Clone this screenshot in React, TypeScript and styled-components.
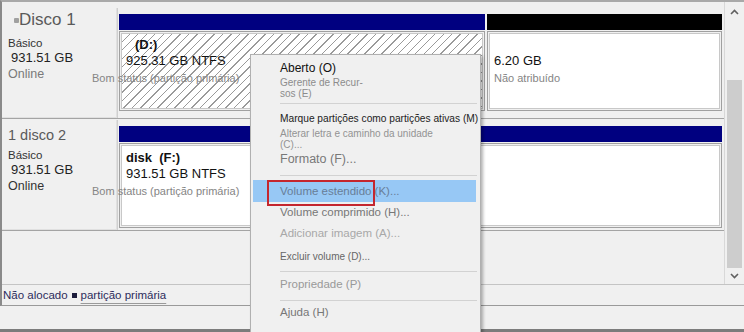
import styled, { createGlobalStyle } from "styled-components";

const GlobalStyle = createGlobalStyle`
  html, body { margin: 0; padding: 0; }
  body {
    font-family: "Liberation Sans", Arial, sans-serif;
    background: #f0f0f0;
  }
`;

const Window = styled.div`
  position: relative;
  width: 744px;
  height: 332px;
  overflow: hidden;
  background: #f0f0f0;
  display: flex;
  flex-direction: column;
`;

const Frame = styled.div`
  height: 306px;
  box-sizing: border-box;
  border-top: 2px solid #a9a9a9;
  border-left: 2px solid #8a8a8a;
  border-bottom: 1px solid #9a9a9a;
  display: flex;
  flex-direction: column;
`;

const Main = styled.div`
  flex: 1;
  display: flex;
  min-height: 0;
`;

const Content = styled.div`
  width: 722px;
  display: flex;
  flex-direction: column;
  padding-top: 6px;
  box-sizing: border-box;
`;

const DiskRow = styled.div`
  display: grid;
  grid-template-columns: 116px 1fr;
  height: 110px;
  border-bottom: 1px solid #a4a4a4;
  margin-bottom: 1px;
`;

const Label = styled.div<{ $top: number }>`
  background: #f0f0f0;
  border-right: 1px solid #cfcfcf;
  box-shadow: inset -1px -1px 0 #e0e0e0;
  padding: ${(p) => p.$top}px 0 0 6px;
  display: flex;
  flex-direction: column;
`;

const Title = styled.div<{ $gap: number; $size: number }>`
  display: flex;
  align-items: center;
  font-size: ${(p) => p.$size}px;
  line-height: 24px;
  color: #5a5a5a;
  margin-bottom: ${(p) => p.$gap}px;
`;

const DiskIcon = styled.span`
  width: 5px;
  height: 5px;
  margin: 0 0 0 6px;
  background: #a0a0a0;
  border-radius: 1px;
`;

const Kind = styled.div`
  font-size: 11.5px;
  line-height: 14px;
  color: #333;
`;

const Size = styled.div`
  font-size: 13px;
  line-height: 16px;
  color: #222;
  padding-left: 3px;
`;

const State = styled.div<{ $dark?: boolean }>`
  font-size: 12.5px;
  line-height: 16px;
  color: ${(p) => (p.$dark ? "#333" : "#7a7a7a")};
`;

const Partitions = styled.div`
  display: flex;
  gap: 2px;
  padding: 6px 2px 0 1px;
`;

const Cell = styled.div<{ $w?: number; $bottom: number }>`
  ${(p) => (p.$w ? `width: ${p.$w}px;` : "flex: 1;")}
  display: flex;
  flex-direction: column;
  padding-bottom: ${(p) => p.$bottom}px;
`;

const Bar = styled.div<{ $black?: boolean }>`
  height: 16px;
  background: ${(p) => (p.$black ? "#000" : "#000080")};
`;

const Body = styled.div<{ $hatch?: boolean; $pad: number }>`
  flex: 1;
  margin-top: 1px;
  border: 1px solid #a0a0a0;
  padding: 1px;
  display: flex;
  & > div {
    flex: 1;
    padding: ${(p) => p.$pad}px 0 0 4px;
    border: 1px solid #c8c8c8;
    background: ${(p) =>
      p.$hatch
        ? "repeating-linear-gradient(135deg, #ffffff 0 5px, #9a9a9a 5px 6px)"
        : "#ffffff"};
  }
`;

const Name = styled.div<{ $indent?: number }>`
  font-size: 13px;
  line-height: 16px;
  font-weight: 700;
  color: #111;
  padding-left: ${(p) => p.$indent ?? 0}px;
  white-space: pre;
`;

const Capacity = styled.div`
  font-size: 13px;
  line-height: 16px;
  color: #111;
  white-space: nowrap;
`;

const Status = styled.div<{ $shift?: number }>`
  font-size: 11px;
  line-height: 18px;
  color: #858585;
  margin-left: ${(p) => p.$shift ?? 0}px;
  white-space: nowrap;
`;

const Scrollbar = styled.div`
  width: 20px;
  display: flex;
  flex-direction: column;
  border-left: 1px solid #d8d8d8;
  box-sizing: border-box;
`;

const Arrow = styled.div<{ $h: number }>`
  height: ${(p) => p.$h}px;
  display: flex;
  align-items: center;
  justify-content: center;
  color: #606060;
`;

const Track = styled.div`
  flex: 1;
  display: flex;
  flex-direction: column;
  padding: 58px 2px 0 2px;
`;

const Thumb = styled.div`
  flex: 1;
  background: #cdcdcd;
`;

const Legend = styled.div`
  height: 21px;
  box-sizing: border-box;
  border-top: 1px solid #c4c4c4;
  display: flex;
  align-items: center;
  gap: 4px;
  padding-left: 1px;
  font-size: 11.5px;
  color: #2c2c5c;
`;

const Swatch = styled.span`
  width: 5px;
  height: 5px;
  background: #1c1c3c;
`;

const Underlined = styled.span`
  text-decoration: underline;
  text-decoration-color: #9a9a9a;
  text-underline-offset: 4px;
`;

const BottomStrip = styled.div`
  flex: 1;
  background: #f0f0f0;
  border-bottom: 3px solid #7c7c7c;
`;

const Menu = styled.div`
  position: absolute;
  left: 250px;
  top: 54px;
  width: 231px;
  height: 290px;
  box-sizing: border-box;
  background: #f0f0f0;
  border: 1px solid #b0b0b0;
  box-shadow: 2px 2px 3px rgba(0, 0, 0, 0.3);
  padding-top: 4px;
  display: flex;
  flex-direction: column;
`;

const Item = styled.div<{
  $h: number;
  $size: number;
  $color: string;
  $lh?: number;
  $pt?: number;
}>`
  height: ${(p) => p.$h}px;
  box-sizing: border-box;
  padding: ${(p) => p.$pt ?? 0}px 0 0 29px;
  display: flex;
  flex-direction: column;
  justify-content: ${(p) => (p.$pt !== undefined ? "flex-start" : "center")};
  font-size: ${(p) => p.$size}px;
  line-height: ${(p) => p.$lh ?? p.$size + 3}px;
  color: ${(p) => p.$color};
  white-space: nowrap;
`;

const Active = styled(Item)`
  margin: 0 4px 0 2px;
  padding-left: 27px;
  background: #97c8f5;
`;

const Separator = styled.div<{ $top: number; $bottom: number }>`
  height: 1px;
  background: #d2d2d2;
  margin: ${(p) => p.$top}px 3px ${(p) => p.$bottom}px 29px;
`;

const Callout = styled.div`
  position: absolute;
  left: 16px;
  top: 125px;
  width: 108px;
  height: 26px;
  box-sizing: border-box;
  border: 2px solid #c4262e;
`;

function Chevron({ up }: { up?: boolean }) {
  return (
    <svg width="9" height="6" viewBox="0 0 9 6">
      <path
        d={up ? "M1 5 L4.5 1.5 L8 5" : "M1 1 L4.5 4.5 L8 1"}
        fill="none"
        stroke="currentColor"
        strokeWidth="1.6"
      />
    </svg>
  );
}

export default function App() {
  return (
    <Window>
      <GlobalStyle />
      <Frame>
        <Main>
          <Content>
            <DiskRow>
              <Label $top={0}>
                <Title $gap={4} $size={17}>
                  <DiskIcon />
                  Disco 1
                </Title>
                <Kind>Básico</Kind>
                <Size>931.51 GB</Size>
                <State>Online</State>
              </Label>
              <Partitions>
                <Cell $w={366} $bottom={7}>
                  <Bar />
                  <Body $hatch $pad={3}>
                    <div>
                      <Name $indent={9}>(D:)</Name>
                      <Capacity>925.31 GB NTFS</Capacity>
                      <Status $shift={-34}>Bom status (partição primária)</Status>
                    </div>
                  </Body>
                </Cell>
                <Cell $bottom={7}>
                  <Bar $black />
                  <Body $pad={3}>
                    <div>
                      <Name> </Name>
                      <Capacity>6.20 GB</Capacity>
                      <Status>Não atribuído</Status>
                    </div>
                  </Body>
                </Cell>
              </Partitions>
            </DiskRow>
            <DiskRow>
              <Label $top={3}>
                <Title $gap={1} $size={14.5}>
                  1 disco 2
                </Title>
                <Kind>Básico</Kind>
                <Size>931.51 GB</Size>
                <State $dark>Online</State>
              </Label>
              <Partitions>
                <Cell $bottom={2}>
                  <Bar />
                  <Body $pad={4}>
                    <div>
                      <Name>disk  (F:)</Name>
                      <Capacity>931.51 GB NTFS</Capacity>
                      <Status $shift={-34}>Bom status (partição primária)</Status>
                    </div>
                  </Body>
                </Cell>
              </Partitions>
            </DiskRow>
          </Content>
          <Scrollbar>
            <Arrow $h={20}>
              <Chevron up />
            </Arrow>
            <Track>
              <Thumb />
            </Track>
            <Arrow $h={16}>
              <Chevron />
            </Arrow>
          </Scrollbar>
        </Main>
        <Legend>
          Não alocado
          <Swatch />
          <Underlined>partição primária</Underlined>
        </Legend>
      </Frame>
      <BottomStrip />

      <Menu>
        <Item $h={18} $size={12} $color="#111">
          Aberto (O)
        </Item>
        <Item $h={21} $size={10} $lh={11} $color="#8c8c8c">
          <span>Gerente de Recur-</span>
          <span>sos (E)</span>
        </Item>
        <Separator $top={5} $bottom={7} />
        <Item $h={15} $size={10.2} $color="#222">
          Marque partições como partições ativas (M)
        </Item>
        <Item $h={23} $size={10} $lh={11} $pt={2} $color="#939393">
          <span>Alterar letra e caminho da unidade</span>
          <span>(C)...</span>
        </Item>
        <Item $h={22} $size={12.5} $color="#787878">
          Formato (F)...
        </Item>
        <Separator $top={4} $bottom={4} />
        <Active $h={22} $size={11.5} $color="#687d97">
          Volume estendido (K)...
        </Active>
        <Item $h={20} $size={11.5} $color="#777">
          Volume comprimido (H)...
        </Item>
        <Item $h={23} $size={11.5} $color="#a8a8a8">
          Adicionar imagem (A)...
        </Item>
        <Item $h={22} $size={10} $color="#666">
          Excluir volume (D)...
        </Item>
        <Separator $top={4} $bottom={4} />
        <Item $h={17} $size={11.5} $color="#999">
          Propriedade (P)
        </Item>
        <Separator $top={7} $bottom={4} />
        <Item $h={14} $size={11.5} $color="#777">
          Ajuda (H)
        </Item>
        <Callout />
      </Menu>
    </Window>
  );
}
